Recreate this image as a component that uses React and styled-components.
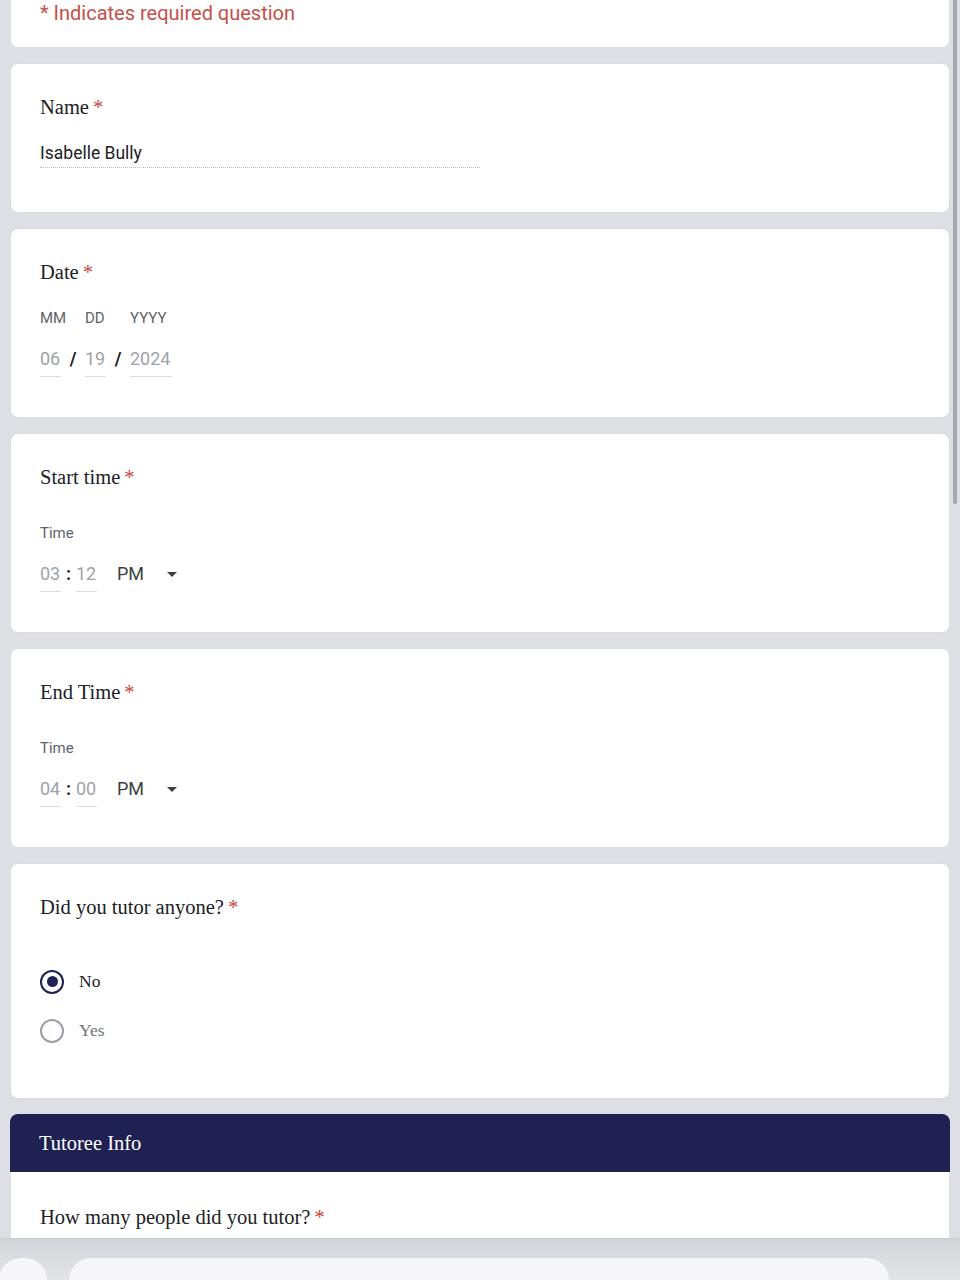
import React from "react";
import styled, { createGlobalStyle } from "styled-components";

const GlobalStyle = createGlobalStyle`
  html, body {
    margin: 0;
    padding: 0;
    background: #dedfe5;
    overflow: hidden;
  }
  * {
    box-sizing: border-box;
  }
`;

const serif = `"Liberation Serif", "Times New Roman", serif`;
const sans = `Roboto, "Liberation Sans", Arial, sans-serif`;

const Screen = styled.div`
  position: relative;
  width: 960px;
  height: 1280px;
  overflow: hidden;
  background: #dedfe5;
`;

const FormColumn = styled.div`
  display: flex;
  flex-direction: column;
  gap: 15px;
  padding: 0 10px;
`;

const Card = styled.div`
  background: #ffffff;
  border: 1px solid #dadce0;
  border-radius: ${(p) => (p.$cut ? "0 0 8px 8px" : "8px")};
  border-top: ${(p) => (p.$cut ? "none" : "1px solid #dadce0")};
  padding: ${(p) => p.$pad || "31px 29px 46px"};
`;

const RequiredNote = styled.div`
  font-family: ${sans};
  font-size: 20px;
  line-height: 24px;
  color: #c5504a;
`;

const Title = styled.div`
  font-family: ${serif};
  font-size: 20.5px;
  line-height: 24px;
  color: #202124;

  span {
    color: #c5453c;
    margin-left: 4px;
  }
`;

const TextAnswer = styled.div`
  margin-top: 22px;
  width: 440px;
  font-family: ${sans};
  font-size: 17.5px;
  line-height: 24px;
  color: #202124;
  padding-bottom: 2px;
  border-bottom: 1px dotted #b8b8bc;
`;

const DateGrid = styled.div`
  display: grid;
  grid-template-columns: 21px 24px 21px 24px 42px;
  grid-template-rows: 20px 24px;
  row-gap: 19px;
  margin-top: ${(p) => p.$top || "24px"};
`;

const TimeGrid = styled(DateGrid)`
  grid-template-columns: 21px 15px 21px 20px 40px 20px;
`;

const FieldLabel = styled.div`
  font-family: ${sans};
  font-size: 15px;
  line-height: 20px;
  color: #5f6368;
  white-space: nowrap;
`;

const FieldValue = styled.div`
  font-family: ${sans};
  font-size: 18px;
  line-height: 24px;
  color: #a0a3a8;
  height: 30px;
  padding-bottom: 5px;
  border-bottom: 1px solid #dadce0;
  white-space: nowrap;
`;

const Separator = styled.div`
  font-family: ${sans};
  font-size: 18px;
  font-weight: 700;
  line-height: 24px;
  color: #202124;
  text-align: center;
`;

const Meridiem = styled.div`
  font-family: ${sans};
  font-size: 18px;
  line-height: 24px;
  color: #3c4043;
`;

const Caret = styled.div`
  display: flex;
  align-items: center;
  height: 24px;
  padding-left: 10px;

  &::after {
    content: "";
    border-left: 5.5px solid transparent;
    border-right: 5.5px solid transparent;
    border-top: 5.5px solid #3c4043;
  }
`;

const RadioList = styled.div`
  margin-top: 38px;
  display: flex;
  flex-direction: column;
`;

const RadioRow = styled.label`
  display: flex;
  align-items: center;
  gap: 15px;
  height: 49px;
  font-family: ${serif};
  font-size: 17.5px;
  color: ${(p) => (p.$checked ? "#202124" : "#70757a")};
`;

const RadioDot = styled.span`
  width: 24px;
  height: 24px;
  border-radius: 50%;
  border: 2px solid ${(p) => (p.$checked ? "#1e2152" : "#9aa0a6")};
  display: flex;
  align-items: center;
  justify-content: center;

  &::after {
    content: "";
    width: 11px;
    height: 11px;
    border-radius: 50%;
    background: ${(p) => (p.$checked ? "#1e2152" : "transparent")};
  }
`;

const Section = styled.div`
  border-radius: 8px 8px 0 0;
  overflow: hidden;
`;

const SectionHeader = styled.div`
  background: #1e2152;
  height: 58px;
  display: flex;
  align-items: center;
  padding: 0 29px;
  font-family: ${serif};
  font-size: 20.5px;
  color: #ffffff;
`;

const SectionBody = styled.div`
  background: #ffffff;
  margin: 0 1px;
  padding: 33px 29px 60px;
`;

const ScrollThumb = styled.div`
  position: absolute;
  top: 0;
  right: 3px;
  width: 4px;
  height: 504px;
  border-radius: 0 0 2px 2px;
  background: #a6a7ad;
`;

const BottomBar = styled.div`
  position: absolute;
  left: 0;
  right: 0;
  bottom: 0;
  height: 42px;
  background: linear-gradient(#d3d4d9, #e3e4e8);
  border-top: 1px solid #cbccd1;
  display: flex;
  align-items: flex-start;
  gap: 22px;
  padding-top: 19px;
`;

const BarPill = styled.div`
  height: 40px;
  width: ${(p) => p.$w};
  margin-left: ${(p) => p.$ml || "0"};
  background: #f6f6f8;
  border-radius: 22px 22px 0 0;
`;

function Required({ children }) {
  return (
    <Title>
      {children}
      <span>*</span>
    </Title>
  );
}

function DateField() {
  return (
    <DateGrid>
      <FieldLabel>MM</FieldLabel>
      <div />
      <FieldLabel>DD</FieldLabel>
      <div />
      <FieldLabel>YYYY</FieldLabel>
      <FieldValue>06</FieldValue>
      <Separator>/</Separator>
      <FieldValue>19</FieldValue>
      <Separator>/</Separator>
      <FieldValue>2024</FieldValue>
    </DateGrid>
  );
}

function TimeField({ hour, minute }) {
  return (
    <TimeGrid $top="34px">
      <FieldLabel>Time</FieldLabel>
      <div />
      <div />
      <div />
      <div />
      <div />
      <FieldValue>{hour}</FieldValue>
      <Separator>:</Separator>
      <FieldValue>{minute}</FieldValue>
      <div />
      <Meridiem>PM</Meridiem>
      <Caret />
    </TimeGrid>
  );
}

export default function App() {
  return (
    <Screen>
      <GlobalStyle />
      <FormColumn>
        <Card $cut $pad="1px 29px 22px">
          <RequiredNote>* Indicates required question</RequiredNote>
        </Card>

        <Card $pad="31px 29px 44px">
          <Required>Name</Required>
          <TextAnswer>Isabelle Bully</TextAnswer>
        </Card>

        <Card>
          <Required>Date</Required>
          <DateField />
        </Card>

        <Card>
          <Required>Start time</Required>
          <TimeField hour="03" minute="12" />
        </Card>

        <Card>
          <Required>End Time</Required>
          <TimeField hour="04" minute="00" />
        </Card>

        <Card $pad="31px 29px 43px">
          <Required>Did you tutor anyone?</Required>
          <RadioList>
            <RadioRow $checked>
              <RadioDot $checked />
              No
            </RadioRow>
            <RadioRow>
              <RadioDot />
              Yes
            </RadioRow>
          </RadioList>
        </Card>

        <Section>
          <SectionHeader>Tutoree Info</SectionHeader>
          <SectionBody>
            <Required>How many people did you tutor?</Required>
          </SectionBody>
        </Section>
      </FormColumn>

      <ScrollThumb />

      <BottomBar>
        <BarPill $w="48px" $ml="-1px" />
        <BarPill $w="820px" />
      </BottomBar>
    </Screen>
  );
}
